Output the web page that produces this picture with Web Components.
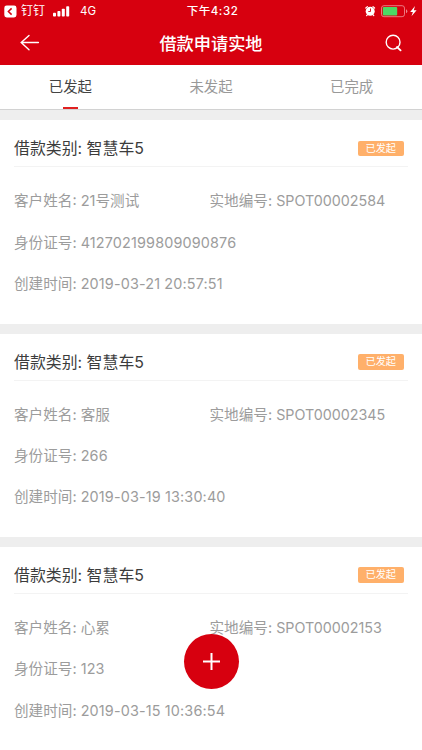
<!DOCTYPE html>
<html lang="zh-CN">
<head>
<meta charset="utf-8">
<meta name="viewport" content="width=device-width, initial-scale=1">
<title>借款申请实地</title>
<style>
  body {
    margin: 0;
    height: 750px;
    overflow: hidden;
    background: #eee;
    font-family: Inter, "Noto Sans CJK SC", sans-serif;
    --red: #d7000f;
  }
</style>
</head>
<body>
<loan-app></loan-app>

<script>
const TABS = ["已发起", "未发起", "已完成"];

const LOANS = [
  { type: "智慧车5", name: "21号测试", code: "SPOT00002584", id: "412702199809090876", date: "2019-03-21 20:57:51" },
  { type: "智慧车5", name: "客服", code: "SPOT00002345", id: "266", date: "2019-03-19 13:30:40" },
  { type: "智慧车5", name: "心累", code: "SPOT00002153", id: "123", date: "2019-03-15 10:36:54" }
];

class StatusBar extends HTMLElement {
  constructor() {
    super();
    this.attachShadow({ mode: "open" });
  }

  static get styles() {
    return `
    :host {
      display: grid;
      grid-template-columns: 1fr auto 1fr;
      align-items: center;
      height: 22px;
      padding: 0 4px;
      color: #fff;
      font-size: 11.5px;
      line-height: 22px;
    }
    .left, .right { display: flex; align-items: center; }
    .right { justify-content: flex-end; }
    .time { padding-left: 3px; font-weight: 500; letter-spacing: 0.55px; }
    .signal { margin: 0 10px 0 8px; }
    .app { margin-left: 4px; font-size: 12px; }
    svg { display: block; }
  `;
  }

  connectedCallback() {
    this.shadowRoot.innerHTML = `
    <style>${StatusBar.styles}</style>
    <div class="left">
      <svg width="13" height="13" viewBox="0 0 13 13">
        <rect x="0.3" y="0.5" width="12.2" height="12" rx="2.4" fill="#fff"/>
        <path d="M7.6 3.4 4.4 6.5l3.2 3.1" fill="none" stroke="#d7000f" stroke-width="1.5"/>
      </svg>
      <span class="app">钉钉</span>
      <svg class="signal" width="17" height="11" viewBox="0 0 17 11" fill="#fff">
        <rect x="0" y="6.8" width="3" height="3.7" rx="0.8"/>
        <rect x="4.4" y="5" width="3" height="5.5" rx="0.8"/>
        <rect x="8.8" y="2.8" width="3" height="7.7" rx="0.8"/>
        <rect x="13.2" y="0.3" width="3" height="10.2" rx="0.8"/>
      </svg>
      <span>4G</span>
    </div>
    <div class="time">下午4:32</div>
    <div class="right">
      <svg width="54" height="14" viewBox="0 0 54 14">
        <circle cx="6.2" cy="7.2" r="4.5" fill="#fff"/>
        <path d="M1.8 4 3.4 2.6M9 2.6l1.6 1.4M3.3 10.8l-.7.8M9.1 10.8l.7.8" stroke="#fff" stroke-width="1.2" stroke-linecap="round"/>
        <path d="M6.5 4.5v3H4.3" fill="none" stroke="#d7000f" stroke-width="0.9"/>
        <rect x="17.5" y="1.7" width="23" height="11" rx="2.4" fill="none" stroke="#ee868c" stroke-width="0.9"/>
        <rect x="18.8" y="3" width="14.4" height="8.4" rx="1" fill="#4cd964"/>
        <path d="M42 5.2q1.3 0.4 1.3 2t-1.3 2z" fill="#ee868c"/>
        <path d="M51 2 46.2 7.9h2.7L47.5 12.3l5.1-6h-2.8z" fill="#fff"/>
      </svg>
    </div>
    `;
  }
}

class NavBar extends HTMLElement {
  constructor() {
    super();
    this.attachShadow({ mode: "open" });
  }

  static get styles() {
    return `
    :host {
      display: flex;
      align-items: center;
      justify-content: space-between;
      height: 42px;
      padding: 0 20px 0 20px;
      color: #fff;
    }
    .title {
      margin-right: 3px;
      padding-top: 1px;
      font-size: 17.2px;
      font-weight: 500;
      line-height: 42px;
    }
    svg {
      display: block;
      fill: none;
      stroke: #fff;
      stroke-width: 1.4;
      stroke-linecap: round;
    }
  `;
  }

  connectedCallback() {
    this.shadowRoot.innerHTML = `
    <style>${NavBar.styles}</style>
    <svg width="20" height="18" viewBox="0 0 20 18"><path d="M18.4 8.5H1.2M9 1.5 1.2 8.5 9 15.7"/></svg>
    <div class="title"><slot></slot></div>
    <svg width="17" height="18" viewBox="0 0 17 18"><circle cx="8.1" cy="8.2" r="6.9"/><path d="M12 13l3.6 3.4" stroke-width="1.8"/></svg>
    `;
  }
}

class TabBar extends HTMLElement {
  constructor() {
    super();
    this.attachShadow({ mode: "open" });
  }

  static get styles() {
    return `
    :host {
      display: flex;
      box-sizing: border-box;
      height: 44.5px;
      background: #fff;
      border-bottom: 1px solid #d2d2d2;
    }
    .tab {
      flex: 1;
      display: flex;
      flex-direction: column;
      align-items: center;
      justify-content: space-between;
      color: #999;
      font-size: 14.4px;
      line-height: 43px;
    }
    .active { color: #444; }
    .active::after {
      content: "";
      width: 15px;
      height: 2px;
      margin-top: -2px;
      background: #e02020;
    }
  `;
  }

  connectedCallback() {
    const tabs = TABS.map((tab, i) => `<div class="tab ${i === 0 ? "active" : ""}">${tab}</div>`).join("");
    this.shadowRoot.innerHTML = `<style>${TabBar.styles}</style>${tabs}`;
  }
}

class LoanCard extends HTMLElement {
  constructor() {
    super();
    this.attachShadow({ mode: "open" });
  }

  static get styles() {
    return `
    :host {
      display: block;
      box-sizing: border-box;
      height: 203.2px;
      padding: 9px 14px 0;
      background: #fff;
    }
    .head {
      display: flex;
      align-items: center;
      justify-content: space-between;
      box-sizing: border-box;
      height: 38px;
      padding-right: 4px;
      border-bottom: 1px solid #f3f3f3;
      color: #3c3c3c;
      font-size: 15.9px;
    }
    .badge {
      width: 46.5px;
      height: 15.5px;
      margin-top: 1px;
      border-radius: 2px;
      background: #ffb06a;
      color: #fff;
      font-size: 10.2px;
      line-height: 15.5px;
      text-align: center;
    }
    .rows {
      display: grid;
      grid-template-columns: 195.5px 1fr;
      grid-auto-rows: 41.2px;
      align-items: center;
      padding-top: 12px;
      color: #9c9c9c;
      font-size: 14.6px;
      white-space: nowrap;
    }
    .wide { grid-column: 1 / -1; }
    .code { font-size: 14.3px; }
    .num { font-size: 14.4px; letter-spacing: 0.15px; }
  `;
  }

  connectedCallback() {
    const get = (name) => this.getAttribute(name);
    this.shadowRoot.innerHTML = `
    <style>${LoanCard.styles}</style>
    <div class="head">
      <div>借款类别: ${get("type")}</div>
      <div class="badge"><slot></slot></div>
    </div>
    <div class="rows">
      <div>客户姓名: ${get("name")}</div>
      <div>实地编号: <span class="code">${get("code")}</span></div>
      <div class="wide">身份证号: <span class="num">${get("id-number")}</span></div>
      <div class="wide">创建时间: <span class="num">${get("date")}</span></div>
    </div>
    `;
  }
}

class AddButton extends HTMLElement {
  constructor() {
    super();
    this.attachShadow({ mode: "open" });
  }

  // floats over the list
  static get styles() {
    return `
    :host {
      position: absolute;
      left: 183.5px;
      top: 633.5px;
      display: grid;
      place-items: center;
      width: 55px;
      height: 55px;
      border-radius: 50%;
      background: var(--red);
    }
    svg { display: block; }
  `;
  }

  connectedCallback() {
    this.shadowRoot.innerHTML = `
    <style>${AddButton.styles}</style>
    <svg width="17" height="17" viewBox="0 0 17 17"><path d="M8.5 0v17M0 8.5h17" stroke="#fff" stroke-width="2"/></svg>
    `;
  }
}

class LoanApp extends HTMLElement {
  constructor() {
    super();
    this.attachShadow({ mode: "open" });
  }

  static get styles() {
    return `
    :host { display: block; }
    header { height: 65.2px; background: var(--red); }
    main {
      display: flex;
      flex-direction: column;
      gap: 10.2px;
      padding-top: 10.7px;
    }
  `;
  }

  connectedCallback() {
    const cards = LOANS.map((loan) => `
      <loan-card type="${loan.type}" name="${loan.name}" code="${loan.code}" id-number="${loan.id}" date="${loan.date}">已发起</loan-card>
    `).join("");
    this.shadowRoot.innerHTML = `
    <style>${LoanApp.styles}</style>
    <header>
      <status-bar></status-bar>
      <nav-bar>借款申请实地</nav-bar>
    </header>
    <tab-bar></tab-bar>
    <main>${cards}</main>
    <add-button></add-button>
    `;
  }
}

customElements.define("status-bar", StatusBar);
customElements.define("nav-bar", NavBar);
customElements.define("tab-bar", TabBar);
customElements.define("loan-card", LoanCard);
customElements.define("add-button", AddButton);
customElements.define("loan-app", LoanApp);
</script>
</body>
</html>
